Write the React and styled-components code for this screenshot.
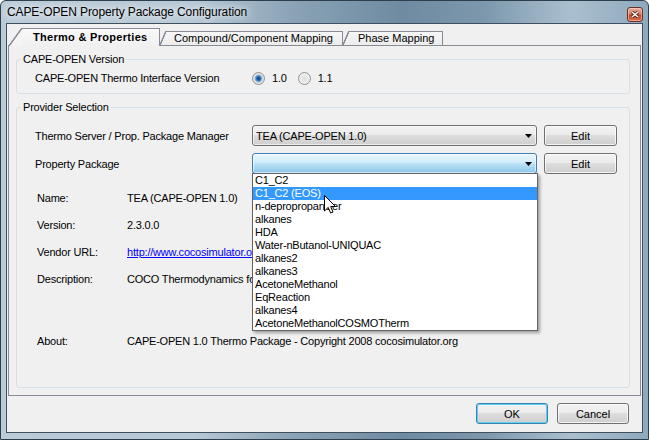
import React from "react";
import styled, { createGlobalStyle } from "styled-components";

const GlobalStyle = createGlobalStyle`
  html, body {
    margin: 0;
    padding: 0;
    background: #ffffff;
  }
  body {
    font-family: "Liberation Sans", Arial, sans-serif;
    font-size: 11px;
    color: #000000;
  }
  * {
    box-sizing: border-box;
  }
`;

const UI_FONT = `"Liberation Sans", Arial, sans-serif`;

// window frame
const Window = styled.div`
  width: 649px;
  height: 440px;
  border: 1px solid #2d3e4c;
  border-radius: 6px 6px 0 0;
  padding: 0 5px 6px 5px;
  display: flex;
  flex-direction: column;
  background: linear-gradient(
    90deg,
    #bccbd8 0%,
    #b7c8d6 30%,
    #8aa3b6 45%,
    #6f8ba1 62%,
    #7d98ad 75%,
    #aac0d0 88%,
    #8fa9bd 100%
  );
`;

const TitleBar = styled.div`
  height: 22px;
  display: flex;
  align-items: center;
  justify-content: space-between;
  padding-left: 1px;
`;

const Title = styled.span`
  font-family: ${UI_FONT};
  font-size: 12px;
  letter-spacing: -0.1px;
  color: #000;
  text-shadow: 0 0 6px rgba(255, 255, 255, 0.95), 0 0 10px rgba(255, 255, 255, 0.8);
`;

const CloseBtn = styled.div`
  width: 16px;
  height: 15px;
  margin-top: 4px;
  border: 1px solid #6b3127;
  border-radius: 3px;
  display: flex;
  align-items: center;
  justify-content: center;
  background: linear-gradient(#eab0a2 0%, #d77a62 45%, #c4472b 55%, #d8704f 100%);
  box-shadow: inset 0 0 0 1px rgba(255, 220, 210, 0.5);
`;

const Client = styled.div`
  flex: 1;
  border: 1px solid #3e5060;
  background: #f0f0f0;
  display: flex;
  flex-direction: column;
  padding: 4px 0 8px 0;
`;

// tabs
const TabStrip = styled.div`
  height: 17px;
  display: flex;
  align-items: flex-end;
  padding-left: 15px;
  position: relative;
  z-index: 2;
`;

const Tab = styled.div`
  position: relative;
  width: ${(p) => p.w}px;
  height: ${(p) => (p.active ? 18 : 14)}px;
  margin-left: ${(p) => p.gap}px;
  margin-bottom: ${(p) => (p.active ? -1 : 0)}px;
  padding-left: ${(p) => p.pad}px;
  border-top: 1px solid #898c95;
  border-right: 1px solid #898c95;
  background: ${(p) =>
    p.active ? "linear-gradient(#f9f9f9, #f0f0f0)" : "linear-gradient(#f6f6f6, #ececec)"};
  z-index: ${(p) => (p.active ? 3 : 1)};
  font-weight: ${(p) => (p.active ? 700 : 400)};
  font-size: 11px;
  letter-spacing: ${(p) => (p.active ? "0.3px" : "0")};
  line-height: ${(p) => (p.active ? 16 : 13)}px;
  white-space: nowrap;

  &::before {
    content: "";
    position: absolute;
    top: -1px;
    bottom: 0;
    left: -${(p) => p.slant}px;
    width: ${(p) => p.slant}px;
    background: linear-gradient(
      to top left,
      ${(p) => (p.active ? "#f4f4f4" : "#f0f0f0")} 0,
      ${(p) => (p.active ? "#f4f4f4" : "#f0f0f0")} calc(50% - 1px),
      #898c95 calc(50% - 0.5px),
      #898c95 calc(50% + 0.5px),
      transparent calc(50% + 1px)
    );
  }
`;

const Panel = styled.div`
  position: relative;
  z-index: 1;
  margin: 0 1px;
  height: 351px;
  border: 1px solid #898c95;
  background: #f0f0f0;
  padding: 7px 10px 0 7px;
  display: flex;
  flex-direction: column;
  gap: 7px;
  letter-spacing: -0.2px;
`;

// group boxes
const Group = styled.fieldset`
  margin: 0;
  min-width: 0;
  padding: 0 0 ${(p) => p.pb}px 0;
  border: 1px solid #d5dfe5;
  border-radius: 3px;
`;

const Legend = styled.legend`
  margin-left: 4px;
  padding: 0 2px;
  font-size: 11px;
  line-height: 13px;
`;

const VersionRow = styled.div`
  height: 24px;
  padding-left: 18px;
  display: grid;
  grid-template-columns: 217px auto;
  align-items: center;
`;

const RadioGroup = styled.div`
  display: flex;
  align-items: center;
`;

const RadioOption = styled.label`
  display: flex;
  align-items: center;
  gap: 7px;
  margin-right: 11px;
`;

const RadioDot = styled.span`
  width: 13px;
  height: 13px;
  border-radius: 50%;
  border: 1px solid #8f9090;
  background: ${(p) =>
    p.checked
      ? "radial-gradient(circle, #123f6d 0, #2a6fb4 2px, #86bde8 3.5px, #dcdcdc 4.2px, #f6f6f6 100%)"
      : "radial-gradient(circle, #dedede 0, #e8e8e8 3px, #f8f8f8 100%)"};
`;

const ProviderBody = styled.div`
  padding-left: 18px;
`;

const ComboRow = styled.div`
  display: grid;
  grid-template-columns: 210px 285px 73px;
  column-gap: 7px;
  align-items: center;
  height: 21px;
  margin-top: ${(p) => p.mt}px;
`;

const Combo = styled.div`
  position: relative;
  height: 21px;
  border: 1px solid ${(p) => (p.focused ? "#3c7fb1" : "#707070")};
  border-radius: 3px;
  padding: 0 4px 0 3px;
  display: flex;
  align-items: center;
  background: ${(p) =>
    p.focused
      ? "linear-gradient(#eaf6fd 0%, #d4eefb 40%, #b6dff5 55%, #8cc6ea 100%)"
      : "linear-gradient(#f2f2f2 0%, #ebebeb 49%, #dddddd 50%, #cfcfcf 100%)"};
  box-shadow: inset 0 0 0 1px rgba(255, 255, 255, 0.6);
`;

const ComboText = styled.span`
  flex: 1;
  white-space: nowrap;
`;

const DropList = styled.div`
  position: absolute;
  top: 100%;
  left: -1px;
  width: 286px;
  border: 1px solid #646464;
  background: #ffffff;
  box-shadow: 2px 2px 3px rgba(0, 0, 0, 0.35);
  z-index: 10;
`;

const DropItem = styled.div`
  height: 13px;
  line-height: 13px;
  padding-left: 2px;
  white-space: nowrap;
  background: ${(p) => (p.selected ? "#3399ff" : "transparent")};
  color: ${(p) => (p.selected ? "#ffffff" : "#000000")};
`;

const Cursor = styled.svg`
  position: absolute;
  left: 71px;
  top: 21px;
`;

const Button = styled.button`
  width: ${(p) => p.w || 72}px;
  height: 21px;
  padding: 0;
  border: 1px solid ${(p) => (p.primary ? "#3c7fb1" : "#707070")};
  border-radius: 3px;
  background: linear-gradient(#f2f2f2 0%, #ebebeb 49%, #dddddd 50%, #cfcfcf 100%);
  box-shadow: inset 0 0 0 1px ${(p) => (p.primary ? "#5fd0f4" : "rgba(255, 255, 255, 0.75)")};
  font-family: ${UI_FONT};
  font-size: 11px;
  color: #000;
`;

const InfoGrid = styled.div`
  margin-top: 11px;
  padding-left: 2px;
  display: grid;
  grid-template-columns: 90px 1fr;
  grid-template-rows: 27px 27px 27px 62px 27px;
  line-height: 27px;
`;

const InfoValue = styled.div`
  white-space: nowrap;
  overflow: hidden;
`;

const Link = styled.a`
  color: #0000ff;
  text-decoration: underline;
`;

const Footer = styled.div`
  margin-top: 7px;
  padding-right: 13px;
  display: flex;
  justify-content: flex-end;
  gap: 9px;
`;

function ComboArrow() {
  return (
    <svg width="7" height="4" viewBox="0 0 7 4">
      <polygon points="0,0 7,0 3.5,4" fill="#000" />
    </svg>
  );
}

const packages = [
  "C1_C2",
  "C1_C2 (EOS)",
  "n-depropropanizer",
  "alkanes",
  "HDA",
  "Water-nButanol-UNIQUAC",
  "alkanes2",
  "alkanes3",
  "AcetoneMethanol",
  "EqReaction",
  "alkanes4",
  "AcetoneMethanolCOSMOTherm",
];

export default function App() {
  return (
    <>
      <GlobalStyle />
      <Window>
        <TitleBar>
          <Title>CAPE-OPEN Property Package Configuration</Title>
          <CloseBtn>
            <svg width="8" height="7" viewBox="0 0 8 7">
              <path d="M1 1 L7 6 M7 1 L1 6" stroke="#4a1a12" strokeWidth="3" />
              <path d="M1 1 L7 6 M7 1 L1 6" stroke="#ffffff" strokeWidth="1.6" />
            </svg>
          </CloseBtn>
        </TitleBar>
        <Client>
          <TabStrip>
            <Tab active w={138} gap={0} pad={11} slant={13}>
              Thermo &amp; Properties
            </Tab>
            <Tab w={177} gap={6} pad={8} slant={6}>
              Compound/Component Mapping
            </Tab>
            <Tab w={94} gap={6} pad={9} slant={6}>
              Phase Mapping
            </Tab>
          </TabStrip>
          <Panel>
            <Group pb={3}>
              <Legend>CAPE-OPEN Version</Legend>
              <VersionRow>
                <span>CAPE-OPEN Thermo Interface Version</span>
                <RadioGroup>
                  <RadioOption>
                    <RadioDot checked />
                    1.0
                  </RadioOption>
                  <RadioOption>
                    <RadioDot />
                    1.1
                  </RadioOption>
                </RadioGroup>
              </VersionRow>
            </Group>
            <Group pb={32}>
              <Legend>Provider Selection</Legend>
              <ProviderBody>
                <ComboRow mt={11}>
                  <span>Thermo Server / Prop. Package Manager</span>
                  <Combo>
                    <ComboText>TEA (CAPE-OPEN 1.0)</ComboText>
                    <ComboArrow />
                  </Combo>
                  <Button w={73}>Edit</Button>
                </ComboRow>
                <ComboRow mt={7}>
                  <span>Property Package</span>
                  <Combo focused>
                    <ComboText />
                    <ComboArrow />
                    <DropList>
                      {packages.map((name, i) => (
                        <DropItem key={name} selected={i === 1}>
                          {name}
                        </DropItem>
                      ))}
                      <Cursor width="12" height="19" viewBox="0 0 12 19">
                        <path
                          d="M0.5 0.5 L0.5 16 L4.2 12.4 L6.6 18 L9 17 L6.7 11.5 L11.5 11.5 Z"
                          fill="#ffffff"
                          stroke="#000000"
                          strokeWidth="1"
                        />
                      </Cursor>
                    </DropList>
                  </Combo>
                  <Button w={73}>Edit</Button>
                </ComboRow>
                <InfoGrid>
                  <span>Name:</span>
                  <InfoValue>TEA (CAPE-OPEN 1.0)</InfoValue>
                  <span>Version:</span>
                  <InfoValue>2.3.0.0</InfoValue>
                  <span>Vendor URL:</span>
                  <InfoValue>
                    <Link href="#">http://www.cocosimulator.org</Link>
                  </InfoValue>
                  <span>Description:</span>
                  <InfoValue>COCO Thermodynamics for CAPE-OPEN</InfoValue>
                  <span>About:</span>
                  <InfoValue>CAPE-OPEN 1.0 Thermo Package - Copyright 2008 cocosimulator.org</InfoValue>
                </InfoGrid>
              </ProviderBody>
            </Group>
          </Panel>
          <Footer>
            <Button primary>OK</Button>
            <Button>Cancel</Button>
          </Footer>
        </Client>
      </Window>
    </>
  );
}
